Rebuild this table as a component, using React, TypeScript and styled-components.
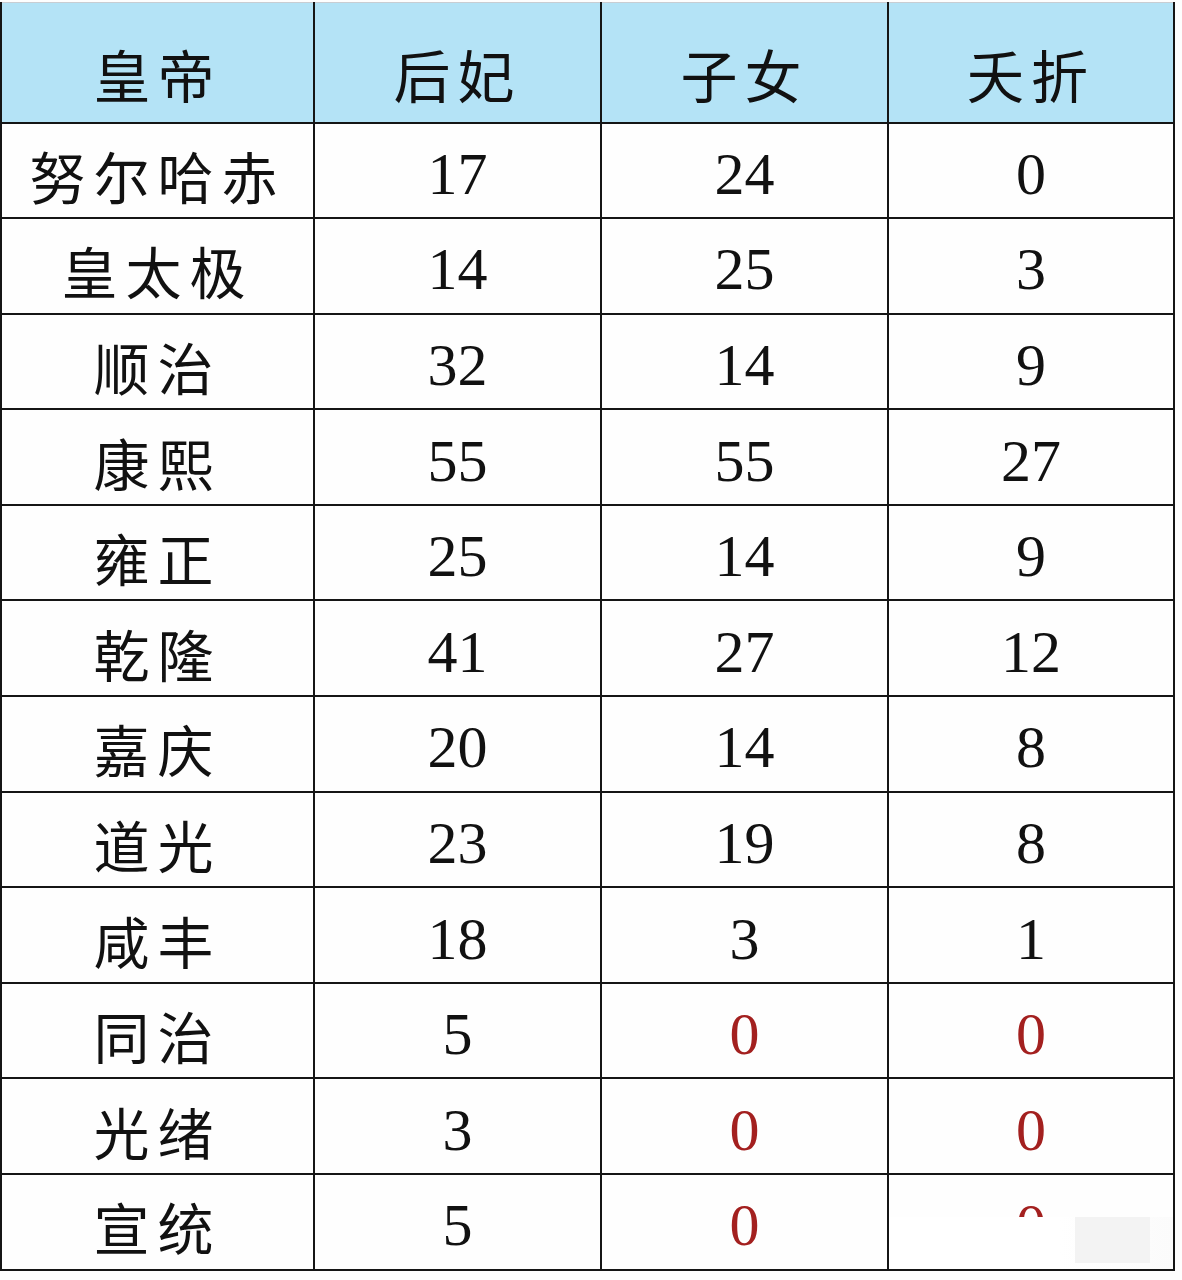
import React from 'react';
import styled, { createGlobalStyle } from 'styled-components';

const GlobalStyle = createGlobalStyle`
  html, body {
    margin: 0;
    padding: 0;
    background: #ffffff;
  }
`;

const Page = styled.div`
  width: 1182px;
  height: 1280px;
  padding-top: 2px;
  box-sizing: border-box;
  background: #fefefe;
  overflow: hidden;
`;

const Table = styled.table`
  border-collapse: collapse;
  table-layout: fixed;
  width: 1173px;
  border-top: 1px solid #c9cdd2;
`;

const HeadCell = styled.th`
  height: 120px;
  padding: 22px 0 0;
  background: #b4e3f6;
  border: 2px solid #151515;
  border-top: none;
  font-family: "Noto Sans CJK SC", sans-serif;
  font-weight: 400;
  font-size: 57px;
  letter-spacing: 7px;
  color: #111;
  text-align: center;
  box-sizing: border-box;
`;

const NameCell = styled.td`
  height: 95.6px;
  padding: 8px 0 0;
  border: 2px solid #151515;
  font-family: "Noto Sans CJK SC", sans-serif;
  font-size: 56px;
  letter-spacing: 8px;
  color: #111;
  text-align: center;
  box-sizing: border-box;
`;

const NumCell = styled.td<{ $red?: boolean }>`
  position: relative;
  height: 95.6px;
  padding: 8px 0 0;
  border: 2px solid #151515;
  font-family: "Liberation Serif", serif;
  font-size: 60px;
  color: ${p => (p.$red ? '#a3201f' : '#111')};
  text-align: center;
  box-sizing: border-box;
`;

const Smudge = styled.div`
  position: absolute;
  left: 0;
  right: 0;
  top: 42px;
  bottom: 0;
  background: linear-gradient(90deg, #ffffff 0%, #ffffff 60%, #fbfbfb 100%);
`;

const GreyPatch = styled.div`
  position: absolute;
  left: 186px;
  top: 0;
  width: 75px;
  height: 46px;
  background: #f3f3f3;
`;

type Row = [string, number, number, number];

const rows: Row[] = [
  ['努尔哈赤', 17, 24, 0],
  ['皇太极', 14, 25, 3],
  ['顺治', 32, 14, 9],
  ['康熙', 55, 55, 27],
  ['雍正', 25, 14, 9],
  ['乾隆', 41, 27, 12],
  ['嘉庆', 20, 14, 8],
  ['道光', 23, 19, 8],
  ['咸丰', 18, 3, 1],
  ['同治', 5, 0, 0],
  ['光绪', 3, 0, 0],
  ['宣统', 5, 0, 0],
];

const redFrom = 9;

export default function App() {
  return (
    <Page>
      <GlobalStyle />
      <Table>
        <colgroup>
          <col style={{ width: 313 }} />
          <col style={{ width: 287 }} />
          <col style={{ width: 287 }} />
          <col style={{ width: 286 }} />
        </colgroup>
        <thead>
          <tr>
            <HeadCell>皇帝</HeadCell>
            <HeadCell>后妃</HeadCell>
            <HeadCell>子女</HeadCell>
            <HeadCell>夭折</HeadCell>
          </tr>
        </thead>
        <tbody>
          {rows.map(([name, a, b, c], i) => {
            const red = i >= redFrom;
            const last = i === rows.length - 1;
            return (
              <tr key={name}>
                <NameCell>{name}</NameCell>
                <NumCell>{a}</NumCell>
                <NumCell $red={red}>{b}</NumCell>
                <NumCell $red={red}>
                  {c}
                  {last && (
                    <Smudge>
                      <GreyPatch />
                    </Smudge>
                  )}
                </NumCell>
              </tr>
            );
          })}
        </tbody>
      </Table>
    </Page>
  );
}
